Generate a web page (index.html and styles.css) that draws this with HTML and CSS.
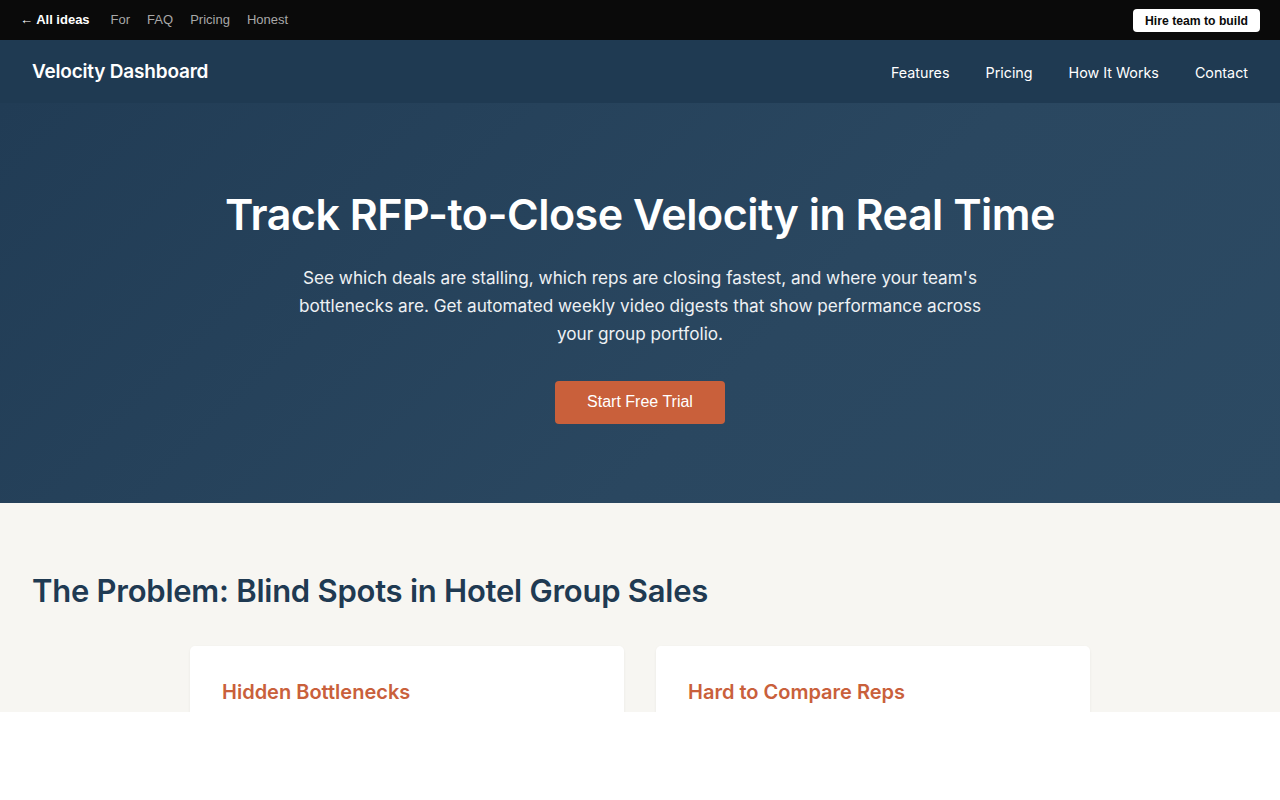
FILE: index.html
```html
<!DOCTYPE html>
<html lang="en">
<head>
  <meta charset="UTF-8">
  <meta name="viewport" content="width=device-width, initial-scale=1.0">
  <title>Velocity Dashboard</title>
  <link rel="stylesheet" href="styles.css">
</head>
<body>
  <!-- top strip with the idea links -->
  <div class="topbar">
    <div class="topbar-links">
      <a href="#" class="back">&larr; All ideas</a>
      <a href="#">For</a>
      <a href="#">FAQ</a>
      <a href="#">Pricing</a>
      <a href="#">Honest</a>
    </div>
    <a href="#" class="hire">Hire team to build</a>
  </div>

  <div class="frame">
    <header class="nav">
      <div class="logo">Velocity Dashboard</div>
      <nav class="nav-links">
        <a href="#">Features</a>
        <a href="#">Pricing</a>
        <a href="#">How It Works</a>
        <a href="#">Contact</a>
      </nav>
    </header>

    <section class="hero">
      <h1>Track RFP-to-Close Velocity in Real Time</h1>
      <p>See which deals are stalling, which reps are closing fastest, and where your team's bottlenecks are. Get automated weekly video digests that show performance across your group portfolio.</p>
      <button class="cta">Start Free Trial</button>
    </section>

    <section class="problem">
      <h2>The Problem: Blind Spots in Hotel Group Sales</h2>
      <div class="cards">
        <div class="card">
          <h3>Hidden Bottlenecks</h3>
        </div>
        <div class="card">
          <h3>Hard to Compare Reps</h3>
        </div>
      </div>
    </section>
  </div>
</body>
</html>
```

FILE: styles.css
```css
* {
    box-sizing: border-box;
}

body {
    margin: 0;
    background: #fff;
    font-family: "Inter", "Liberation Sans", sans-serif;
}

a {
    text-decoration: none;
}

.topbar {
    height: 40px;
    background: #0a0a0a;
    display: flex;
    align-items: center;
    justify-content: space-between;
    padding: 0 20px;
    font-family: "Liberation Sans", Arial, sans-serif;
    font-size: 13px;
}

.topbar-links {
    display: flex;
    gap: 17px;
    margin-top: -1px;
}

.topbar-links a {
    color: #a8a8a8;
}

.topbar-links a.back {
    color: #fff;
    font-weight: bold;
    margin-right: 4px;
}

.hire {
    background: #fff;
    color: #0a0a0a;
    font-weight: bold;
    font-size: 12.2px;
    padding: 5px 12px 4px;
    border-radius: 4px;
}

.frame {
    height: 672px;
    overflow: hidden;
}

.nav {
    height: 63px;
    background: #1f3a52;
    display: flex;
    align-items: center;
    justify-content: space-between;
    padding: 0 32px;
}

.logo {
    color: #fff;
    font-size: 19px;
    font-weight: 600;
    letter-spacing: -0.2px;
}

.nav-links {
    display: flex;
    gap: 36px;
    margin-top: 2px;
}

.nav-links a {
    color: #fff;
    font-size: 14.3px;
}

.hero {
    height: 400px;
    background: linear-gradient(135deg, #213c55 0%, #2a4760 60%, #2c4a63 100%);
    text-align: center;
    padding-top: 86px;
    color: #fff;
}

.hero h1 {
    margin: 0;
    font-size: 43px;
    font-weight: 600;
    letter-spacing: -0.5px;
    line-height: 1.2;
}

.hero p {
    max-width: 700px;
    margin: 23px auto 33px;
    font-size: 17.2px;
    line-height: 28px;
    color: #eef1f4;
}

.cta {
    background: #c9603b;
    color: #fff;
    border: none;
    border-radius: 4px;
    width: 170px;
    height: 43px;
    font-family: "Liberation Sans", Arial, sans-serif;
    font-size: 16px;
}

.problem {
    background: #f7f6f2;
    padding: 69px 32px 80px;
}

.problem h2 {
    margin: 0 0 37px;
    font-size: 31px;
    font-weight: 600;
    color: #1f3a52;
    letter-spacing: -0.25px;
}

.cards {
    display: grid;
    grid-template-columns: 434px 434px;
    gap: 32px;
    justify-content: center;
}

.card {
    background: #fff;
    border-radius: 5px;
    box-shadow: 0 1px 3px rgba(0, 0, 0, 0.06);
    padding: 34px 32px;
    height: 200px;
}

.card h3 {
    margin: 0;
    color: #c9603b;
    font-size: 20px;
    font-weight: 600;
}
```
